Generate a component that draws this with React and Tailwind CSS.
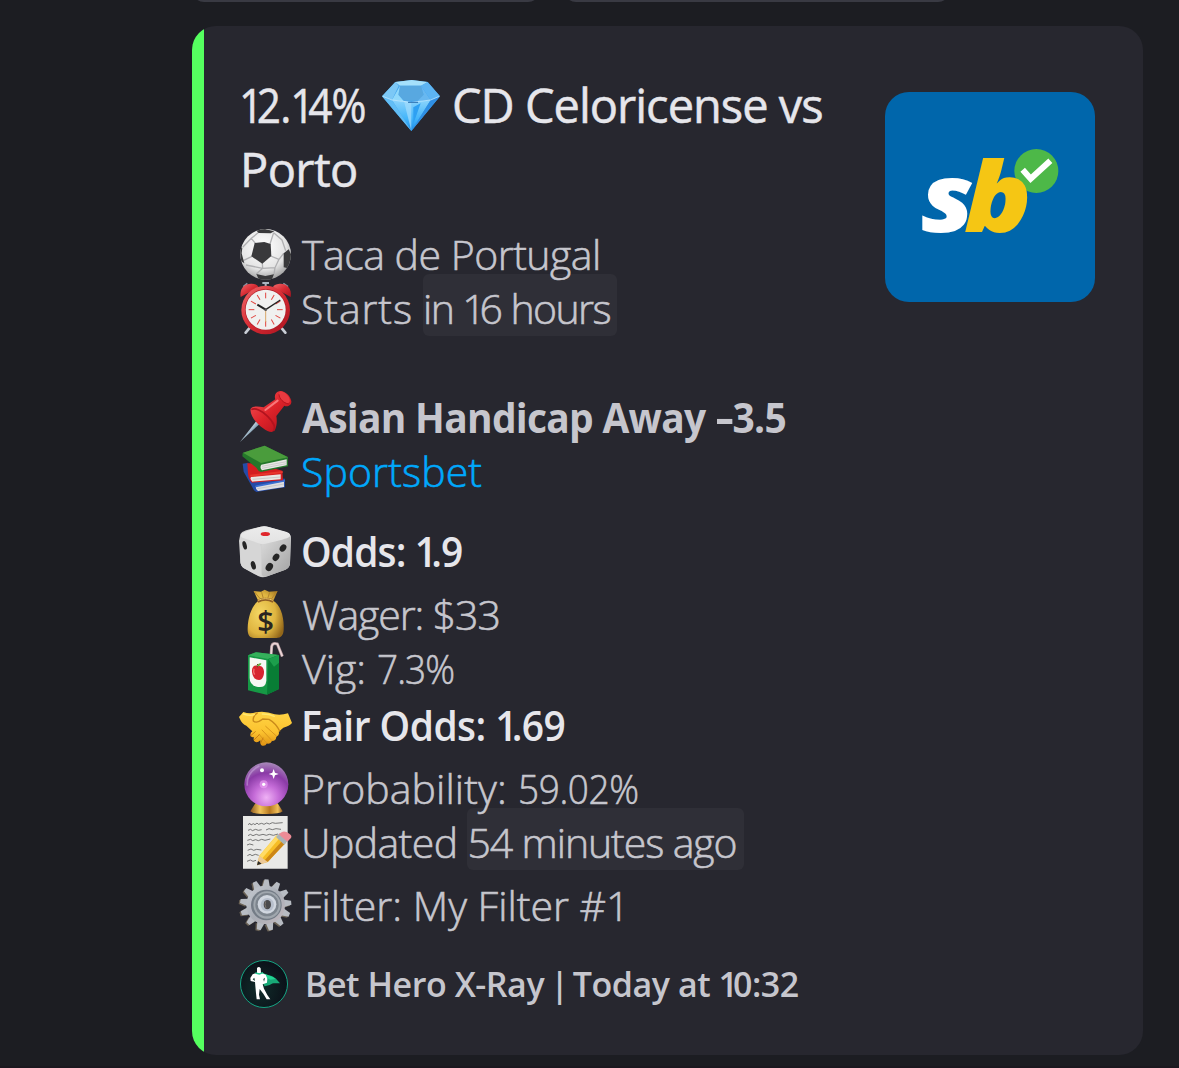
import React from "react";

function Words({ children }) {
  return children.split(/(1)/).map((part, i) =>
    part === "1" ? (
      <span key={i} className="tracking-[-0.15em]">1</span>
    ) : (
      <React.Fragment key={i}>{part}</React.Fragment>
    )
  );
}

function Icon({ viewBox, className = "h-[54px] w-[52px]", children }) {
  return (
    <svg viewBox={viewBox} className={`${className} shrink-0 overflow-visible`} aria-hidden="true">
      {children}
    </svg>
  );
}

function Diamond() {
  return (
    <Icon viewBox="606 237 174 159" className="mr-3 h-[53px] w-[58px]">
      <defs>
        <linearGradient id="gemL" x1="0" y1="0" x2="1" y2="1">
          <stop offset="0" stopColor="#4ba9ee" />
          <stop offset="1" stopColor="#2d9df0" />
        </linearGradient>
        <linearGradient id="gemC" x1="0" y1="0" x2="0" y2="1">
          <stop offset="0" stopColor="#8bd3fb" />
          <stop offset="0.6" stopColor="#43b5fa" />
          <stop offset="1" stopColor="#1d8de8" />
        </linearGradient>
      </defs>
      <path d="M606 289 646 246 695 240 743 246 780 289 694 393Z" fill="url(#gemL)" />
      <path d="M636 300 694 307 752 300 694 393Z" fill="url(#gemC)" />
      <path d="M606 289 646 246 656 257 636 300Z" fill="#7cc8f6" />
      <path d="M646 246 695 240 743 246 723 257 660 257Z" fill="#a5e0fb" />
      <path d="M660 257 723 257 731 284 716 302 672 302 655 284Z" fill="#58a8e0" />
      <path d="M660 257 636 300 672 304 655 284Z" fill="#90d8fb" />
      <path d="M723 257 752 300 712 304 731 284Z" fill="#68b8f0" />
      <path d="M743 246 780 289 752 300 723 257Z" fill="#5db4f2" />
      <path d="M606 289 636 300 694 393Z" fill="#62bdf5" />
      <path d="M780 289 752 300 694 393Z" fill="#2f8fe4" />
      <path d="M672 304 694 307 694 393Z" fill="#a0dbfc" opacity=".75" />
      <path d="M700 322 722 310 700 372Z" fill="#2ea0f2" />
      <path d="M608 289 636 300 694 307 752 300 778 289" fill="none" stroke="#d5f1ff" strokeWidth="2" />
      <path d="M684 307H714" stroke="#276eaf" strokeWidth="3" />
    </Icon>
  );
}

function Soccer() {
  return (
    <Icon viewBox="27 18 156 162">
      <defs>
        <radialGradient id="ball" cx=".45" cy=".35" r=".65">
          <stop offset="0" stopColor="#ffffff" />
          <stop offset=".7" stopColor="#e4e4e4" />
          <stop offset="1" stopColor="#a5a5a5" />
        </radialGradient>
        <clipPath id="ballClip"><circle cx="107" cy="103" r="76" /></clipPath>
      </defs>
      <circle cx="107" cy="103" r="76" fill="url(#ball)" />
      <g clipPath="url(#ballClip)">
        <path d="M76 70 64 55M120 72 131 38M64 55 86 37M64 55 38 82M66 109 41 121M97 129 98 145M122 108 147 118M98 145 79 162M98 145 48 135M98 145 135 143 147 118M135 143 132 163M147 118 161 100M131 38 156 60 167 92" fill="none" stroke="#b0b0b2" strokeWidth="4" />
        <g fill="#39393b">
          <path d="M74 69 103 66 122 72 124 108 97 131 64 109Z" />
          <path d="M77 30 100 26 133 34 122 40 86 39Z" />
          <path d="M28 76 37 84 35 100 43 130 32 122Z" />
          <path d="M161 100 176 88 186 108 174 145 161 142Z" />
          <path d="M79 162 106 168 132 163 124 182H88Z" />
        </g>
      </g>
    </Icon>
  );
}

function AlarmClock() {
  const ticks = Array.from({ length: 12 }, (_, i) => i * 30);
  return (
    <Icon viewBox="27 180 156 162">
      <defs>
        <linearGradient id="clockRed" x1="0" y1="0" x2="1" y2="1">
          <stop offset="0" stopColor="#f06a6c" />
          <stop offset=".5" stopColor="#d72b33" />
          <stop offset="1" stopColor="#a9131f" />
        </linearGradient>
      </defs>
      <path d="M62 320 47 338M151 320 166 338" stroke="#c9ced6" strokeWidth="8" strokeLinecap="round" />
      <path d="M97 189H117M107 189V203" stroke="#aab4c0" strokeWidth="6" />
      <path d="M40 200 52 190M174 200 160 190" stroke="#8796a4" strokeWidth="5" />
      <path d="M32 231C28 204 44 190 65 191 77 192 84 196 85 202Z" fill="url(#clockRed)" />
      <path d="M182 231C186 204 170 190 149 191 137 192 130 196 129 202Z" fill="url(#clockRed)" />
      <circle cx="107" cy="270" r="73" fill="url(#clockRed)" />
      <circle cx="107" cy="269" r="62" fill="#b01d27" />
      <circle cx="107" cy="269" r="60" fill="#f0f0ef" />
      {ticks.map((a) => (
        <path key={a} d="M107 218V235" transform={`rotate(${a} 107 269)`} stroke="#e0443f" strokeWidth="3" />
      ))}
      <path d="M107 270V306" stroke="#d8a86a" strokeWidth="3" />
      <path d="M107 269 82 254" stroke="#222" strokeWidth="6" />
      <path d="M107 269 151 240" stroke="#222" strokeWidth="4" />
      <circle cx="107" cy="269" r="4" fill="#555" />
    </Icon>
  );
}

function Pushpin() {
  return (
    <Icon viewBox="27 27 156 162">
      <defs>
        <linearGradient id="pinRed" x1="0" y1="0" x2="1" y2="1">
          <stop offset="0" stopColor="#f4575a" />
          <stop offset=".5" stopColor="#dd2229" />
          <stop offset="1" stopColor="#a90f1b" />
        </linearGradient>
        <linearGradient id="needle" x1="0" y1="0" x2="1" y2="1">
          <stop offset=".35" stopColor="#e8f4fb" />
          <stop offset=".6" stopColor="#6e8ea5" />
        </linearGradient>
      </defs>
      <path d="M30 186 83 118 93 128Z" fill="url(#needle)" />
      <path d="M62 86C69 78 84 79 101 82L136 58C132 47 136 35 150 33 165 32 182 48 184 64 185 76 172 82 163 77L139 108C143 130 138 152 125 156 103 156 56 113 62 86Z" fill="url(#pinRed)" />
      <path d="M64 89C75 82 96 92 113 109 130 126 139 144 130 153" fill="none" stroke="#b1131e" strokeWidth="5" />
      <path d="M106 90 143 62" fill="none" stroke="#f9777a" strokeWidth="6" strokeLinecap="round" />
      <ellipse cx="163" cy="52" rx="21" ry="11" transform="rotate(47 163 52)" fill="#ea3a40" />
      <path d="M147 43C148 57 160 69 176 72" fill="none" stroke="#b9151f" strokeWidth="3" />
    </Icon>
  );
}

function Books() {
  return (
    <Icon viewBox="27 189 156 162">
      <path d="M38 251 55 248 68 290 165 296V322L79 336 72 331 41 275Z" fill="#244ba8" />
      <path d="M77 319 162 304V321L84 333Q76 326 77 319Z" fill="#dedee2" />
      <path d="M77 319 165 302" stroke="#3c6ed0" strokeWidth="5" />
      <path d="M52 250 80 250 157 272 159 301 66 308Q56 299 54 282Z" fill="#d41d20" />
      <path d="M63 291 152 283V298L67 305Q59 298 63 291Z" fill="#e9e7e4" />
      <path d="M61 287 158 276" stroke="#e8352d" strokeWidth="6" />
      <path d="M38 219 104 197 174 231 174 259 93 276Q84 273 79 263L37 229Z" fill="#24772a" />
      <path d="M39 218 104 197 174 232 93 249Z" fill="#4a9c3c" />
      <path d="M94 254 170 238V256L96 271Q88 262 94 254Z" fill="#e9e8e6" />
      <path d="M96 259 169 245M96 265 169 251M82 326 162 312M68 298 152 291" stroke="#bbb" strokeWidth="2" />
    </Icon>
  );
}

function Dice() {
  return (
    <Icon viewBox="27 24 156 162">
      <defs>
        <linearGradient id="diceR" x1="0" y1="0" x2="1" y2="1">
          <stop offset="0" stopColor="#dcdcdc" />
          <stop offset="1" stopColor="#a2a2a2" />
        </linearGradient>
        <linearGradient id="diceTop" x1="0" y1="0" x2="0" y2="1">
          <stop offset="0" stopColor="#ececec" />
          <stop offset="1" stopColor="#e2e2e2" />
        </linearGradient>
      </defs>
      <path d="M31 58Q34 51 48 46L92 35Q104 32 116 36L168 52Q183 57 183 68L180 144Q180 158 166 164L112 184Q98 190 86 184L42 160Q31 153 31 139L27 78Z" fill="#d0d0d0" />
      <path d="M30 63 84 83Q94 88 93 100L94 174Q94 184 87 183L42 160Q31 153 31 139Z" fill="#d6d6d6" />
      <path d="M95 90 182 62 180 144Q180 158 166 164L112 184Q95 189 95 174Z" fill="url(#diceR)" />
      <path d="M34 57Q40 50 92 35 104 32 116 36L168 50Q186 56 178 66 170 72 107 86 94 90 81 83L37 68Q30 64 34 57Z" fill="url(#diceTop)" />
      <ellipse cx="106" cy="57" rx="14" ry="6" fill="#df252b" />
      <g fill="#252525">
        <ellipse cx="44" cy="91" rx="6" ry="13" transform="rotate(-16 44 91)" />
        <ellipse cx="70" cy="151" rx="7" ry="13" transform="rotate(-16 70 151)" />
        <ellipse cx="159" cy="99" rx="9" ry="12" transform="rotate(35 159 99)" />
        <ellipse cx="138" cy="127" rx="9" ry="12" transform="rotate(35 138 127)" />
        <ellipse cx="118" cy="156" rx="10" ry="13" transform="rotate(35 118 156)" />
      </g>
    </Icon>
  );
}

function MoneyBag() {
  return (
    <Icon viewBox="27 213 156 162">
      <defs>
        <radialGradient id="bag" cx=".35" cy=".5" r=".7">
          <stop offset="0" stopColor="#f5d765" />
          <stop offset=".6" stopColor="#dfb540" />
          <stop offset="1" stopColor="#93671a" />
        </radialGradient>
      </defs>
      <path d="M71 228 93 230 104 224 117 230 143 228 130 257C151 269 163 305 161 342 161 360 153 369 139 369H72C58 369 52 359 53 339 54 306 66 270 85 258Z" fill="url(#bag)" />
      <path d="M73 230 93 254M95 232 101 254M119 232 112 254M140 230 123 254" stroke="#b3852e" strokeWidth="3" />
      <path d="M83 259Q106 247 130 259" fill="none" stroke="#8f5d26" strokeWidth="9" />
      <path d="M84 256Q106 246 129 256" fill="none" stroke="#edc760" strokeWidth="3" />
      <text x="107" y="351" textAnchor="middle" className="fill-[#292521] font-['Open_Sans',sans-serif] text-[88px] font-semibold">$</text>
    </Icon>
  );
}

function JuiceBox() {
  return (
    <Icon viewBox="27 15 156 162">
      <path d="M123 65 125 34Q128 22 142 27L157 64" fill="none" stroke="#ac9196" strokeWidth="9" strokeLinejoin="round" />
      <path d="M123 65 125 34Q128 22 142 27L157 64" fill="none" stroke="#ead5d6" strokeWidth="5" />
      <path d="M54 61 78 52 146 60 147 162 110 179 54 166Z" fill="#169845" />
      <path d="M54 61 78 52 146 60 115 72Z" fill="#35b05b" />
      <path d="M115 72 147 60V162L111 179Z" fill="#087d35" />
      <path d="M115 72 147 60V83L132 95Z" fill="#1c9e4c" />
      <path d="M59 67 109 76V137Q107 159 84 156 59 151 59 129Z" fill="#f7f8f4" />
      <path d="M84 94C76 88 64 95 66 111 68 127 77 136 84 134 94 138 103 125 102 109 101 95 91 90 84 94Z" fill="#d72430" />
      <path d="M72 101Q69 109 74 119" stroke="#f36d70" strokeWidth="4" fill="none" />
      <path d="M83 97Q80 91 83 87" stroke="#6d421d" strokeWidth="3" fill="none" />
      <path d="M82 94Q84 83 94 85 93 93 82 94Z" fill="#5dad3d" />
    </Icon>
  );
}

function Handshake() {
  return (
    <Icon viewBox="27 186 156 162">
      <defs>
        <linearGradient id="hands" x1="0" y1="0" x2="0" y2="1">
          <stop offset="0" stopColor="#ffd445" />
          <stop offset=".6" stopColor="#fbc22f" />
          <stop offset="1" stopColor="#df9213" />
        </linearGradient>
      </defs>
      <path d="M27 246 40 231Q59 238 78 232 104 226 134 238 155 241 174 235L186 264Q178 274 160 278L146 290Q150 300 139 305 138 318 126 318 120 330 111 325 104 337 93 330 90 322 91 316 81 326 73 319 69 315 72 307 62 307 61 299 61 293 67 289L49 272Q37 270 27 246Z" fill="url(#hands)" />
      <path d="M82 234Q67 244 70 258 79 267 98 252L117 253Q137 264 149 288" fill="none" stroke="#c98a1a" strokeWidth="4" strokeLinecap="round" />
      <path d="M107 274 139 303M96 285 126 317M87 298 111 325" fill="none" stroke="#d9961c" strokeWidth="3" strokeLinecap="round" />
      <path d="M62 302 76 290M73 314 88 299M92 324 99 309" stroke="#c97f14" strokeWidth="3" strokeLinecap="round" />
      <path d="M40 237Q59 244 73 239M97 237Q118 237 133 244" fill="none" stroke="#ffe870" strokeWidth="4" strokeLinecap="round" />
    </Icon>
  );
}

function CrystalBall() {
  return (
    <Icon viewBox="27 15 156 162">
      <defs>
        <radialGradient id="orb" cx=".5" cy=".8" r=".8">
          <stop offset="0" stopColor="#efb1f5" />
          <stop offset=".35" stopColor="#c56cd8" />
          <stop offset=".7" stopColor="#8a3aa6" />
          <stop offset="1" stopColor="#a88ab9" />
        </radialGradient>
        <linearGradient id="brass">
          <stop offset="0" stopColor="#8a571c" />
          <stop offset=".3" stopColor="#f2c35d" />
          <stop offset=".6" stopColor="#b77820" />
          <stop offset=".85" stopColor="#efbe58" />
          <stop offset="1" stopColor="#8d581c" />
        </linearGradient>
      </defs>
      <path d="M76 145H143L158 169Q150 177 109 177 68 177 61 169Z" fill="url(#brass)" />
      <circle cx="109" cy="88" r="66" fill="url(#orb)" />
      <path d="M52 92Q48 53 88 33" fill="none" stroke="#c9a4dc" strokeWidth="5" opacity=".55" />
      <circle cx="101" cy="88" r="12" fill="#f0a6f6" opacity=".6" />
      <g fill="#fff">
        <path d="M131 42 135 53 146 57 135 61 131 72 127 61 116 57 127 53Z" />
        <circle cx="96" cy="46" r="6" />
        <circle cx="101" cy="88" r="5" />
      </g>
    </Icon>
  );
}

function Memo() {
  return (
    <Icon viewBox="27 177 156 162">
      <path d="M39 183H173V341H39Z" fill="#e9e9e7" />
      <path d="M54 209l6-4 3 5 7-4 5 3 6-5 4 4 10-3 7 3 8-4 8 3 9-4 9 2 22-2M54 226l8-3 5 4 10-4 8 3 10-2M108 225l9-4 10 3 11-3 15 2M54 242l7-4 8 4 10-4 8 3 12-3 10 3 9-3 12 3 14-4M52 256l10-3 6 4 9-3 8 3 10-4 10 3 16-4M51 270l8-3 11 3M53 286l10-4 8 4 9-3 14 2M52 302l8-4 6 4 10-4 10 3M51 319l10-4 8 4 9-3" fill="none" stroke="#606060" strokeWidth="2.5" />
      <path d="M81 331 88 302 140 241 167 263 113 321Z" fill="#f6bd25" />
      <path d="M88 302 140 241 149 249 97 310Z" fill="#ffdb65" />
      <path d="M104 316 158 256 167 263 113 321Z" fill="#cc8617" />
      <path d="M81 331 88 302 113 321Z" fill="#ecc998" />
      <path d="M81 331 84 318 95 326Z" fill="#292929" />
      <path d="M138 246 148 235 174 256 163 269Z" fill="#a9b4b7" />
      <path d="M146 238 156 231Q165 227 178 236 188 243 182 250L172 260Z" fill="#ed8c96" />
    </Icon>
  );
}

function Gear() {
  const teeth = Array.from({ length: 13 }, (_, i) => i * (360 / 13) + 2);
  return (
    <Icon viewBox="177 21 156 162">
      <defs>
        <linearGradient id="steel" x1="0" y1="0" x2="1" y2="1">
          <stop offset="0" stopColor="#c6cbd2" />
          <stop offset=".5" stopColor="#a9adb5" />
          <stop offset="1" stopColor="#c3b9bf" />
        </linearGradient>
      </defs>
      <g fill="#6b6255" transform="translate(-3 2)">
        {teeth.map((a) => <path key={a} d="M245 50 250 29H262L267 50Z" transform={`rotate(${a} 256 106)`} />)}
      </g>
      {teeth.map((a) => <path key={a} d="M245 52 251 28H263L268 52Z" transform={`rotate(${a} 257 105)`} fill="#b7bbc2" />)}
      <circle cx="257" cy="105" r="58" fill="url(#steel)" />
      <circle cx="259" cy="105" r="46" fill="#747c86" />
      <circle cx="261" cy="105" r="41" fill="#a0a7ae" />
      <circle cx="261" cy="104" r="35" fill="#7d858e" />
      <circle cx="261" cy="103" r="28" fill="#d1d7e0" />
      <circle cx="262" cy="104" r="20" fill="#b6becb" />
      <ellipse cx="262" cy="104" rx="11" ry="14" fill="#4b4b4e" />
      <path d="M257 94Q253 104 258 114" fill="none" stroke="#7b736c" strokeWidth="3" />
    </Icon>
  );
}

function HeroAvatar() {
  return (
    <Icon viewBox="180 270 144 144" className="size-12">
      <defs>
        <radialGradient id="heroBg" cx=".4" cy=".6" r=".6">
          <stop offset="0" stopColor="#102c2a" />
          <stop offset="1" stopColor="#0b1119" />
        </radialGradient>
      </defs>
      <circle cx="252" cy="342" r="70.5" fill="url(#heroBg)" stroke="#14a583" strokeWidth="3" />
      <path d="M246 308C263 316 278 316 288 326L300 340C288 340 278 337 269 345L254 349 248 338Z" fill="#18a977" />
      <path d="M247 309C262 316 277 318 287 327L271 329 255 321Z" fill="#22d694" />
      <path d="M231 294Q237 288 242 295L243 308 257 314 262 326 261 338 248 343 252 356 262 375 271 388 260 388 250 371 239 357 237 374 240 388 230 388 228 370 226 348 225 336 212 333 211 324 218 313 231 308Z" fill="#fff" />
      <path d="M218 328 223 323 225 333ZM250 327 255 323 252 335Z" fill="#10392f" />
      <path d="M226 309 238 312 249 308" fill="none" stroke="#26c993" strokeWidth="4" />
    </Icon>
  );
}

function SportsbetLogo() {
  return (
    <Icon viewBox="-45 -114 630 630" className="size-[210px] rounded-3xl bg-[#0066ab]">
      <circle cx="409" cy="123" r="66" fill="#4db848" />
      <path d="M368 119 392 146 451 92" fill="none" stroke="#fff" strokeWidth="18" />
      <text transform="translate(62 306) scale(1.12 1)" className="fill-white font-['Open_Sans',sans-serif] text-[286px] font-extrabold italic">s</text>
      <text transform="translate(192 306) scale(1.15 1)" className="fill-[#f5c614] font-['Open_Sans',sans-serif] text-[291px] font-extrabold italic">b</text>
    </Icon>
  );
}

function Row({ icon, className = "", children }) {
  return (
    <div className={`flex h-[54px] items-center gap-2.5 text-[41px] leading-[54px] font-light whitespace-pre text-[#c6c6cd] ${className}`}>
      {icon}
      <div className="pt-0.5">{children}</div>
    </div>
  );
}

const light = "[-webkit-text-stroke:0.6px_currentColor]";

function Light({ className = "", children }) {
  return <span className={`${light} ${className}`}>{children}</span>;
}

function Timestamp({ className = "", children }) {
  return <span className={`rounded-md bg-white/4 pt-1.5 ${light} ${className}`}><Words>{children}</Words></span>;
}

export default function App() {
  return (
    <main className="flex h-[1068px] w-[1179px] flex-col overflow-hidden border-b-2 border-[#1b181f] bg-[#1c1d22] pl-48 font-['Open_Sans',sans-serif]">
      <div className="flex h-0.5 shrink-0 items-end gap-6 overflow-hidden">
        <div className="h-12 w-[348px] shrink-0 rounded-xl bg-[#393a43]" />
        <div className="h-12 w-[386px] shrink-0 rounded-xl bg-[#393a43]" />
      </div>

      <article className="mt-6 flex h-[1029px] w-[951px] shrink-0 overflow-hidden rounded-3xl bg-[#27272f]">
        <div className="w-3 shrink-0 bg-[#55ff5f]" />
        <div className="flex flex-1 items-start justify-between pr-12 pl-[35px]">
          <div className="flex flex-col pt-[47px]">
            <h1 className="text-[47px] leading-16 font-normal whitespace-nowrap text-[#e6e6eb] [-webkit-text-stroke:0.5px_currentColor]">
              <span className="flex items-center">
                <span className="w-[143px]"><span className="inline-block origin-left scale-x-90 tracking-[-1px]"><Words>12.14%</Words></span></span>
                <Diamond />
                <span className="tracking-[-1px]">CD Celoricense vs</span>
              </span>
              <span className="block pl-px tracking-[-0.6px]">Porto</span>
            </h1>

            <section className="mt-[25px]">
              <Row icon={<Soccer />}><Light className="pl-px tracking-[-0.5px]">Taca de Portugal</Light></Row>
              <Row icon={<AlarmClock />}>
                <Light className="tracking-[0.9px]">Starts</Light>
                <Timestamp className="ml-[10px] pr-[7px] tracking-[-1.6px]">in 16 hours</Timestamp>
              </Row>
              <Row icon={<Pushpin />} className="mt-[55px]">
                <strong className="ml-px inline-block origin-left scale-x-95 font-bold tracking-[-0.75px]">
                  Asian Handicap Away <span className="mr-1.5 inline-block origin-left scale-x-150">-</span>3.5
                </strong>
              </Row>
              <Row icon={<Books />}><Light className="tracking-[0.1px] text-[#00a8fc]">Sportsbet</Light></Row>
            </section>

            <section className="mt-[26px]">
              <Row icon={<Dice />}><strong className="inline-block origin-left scale-x-95 font-semibold tracking-[-0.9px] text-[#e6e6eb]"><Words>Odds: 1.9</Words></strong></Row>
              <Row icon={<MoneyBag />} className="mt-[9px]"><Light className="pl-px tracking-[-1.1px]">Wager: $33</Light></Row>
              <Row icon={<JuiceBox />}><Light className="pl-px">Vig: <span className="inline-block origin-left scale-x-90 tracking-[-1px]">7.3%</span></Light></Row>
              <Row icon={<Handshake />} className="mt-[3px]"><strong className="inline-block origin-left scale-x-95 font-semibold tracking-[-0.55px] text-[#e6e6eb]"><Words>Fair Odds: 1.69</Words></strong></Row>
              <Row icon={<CrystalBall />} className="mt-[9px]"><Light className="tracking-[0.1px]">Probability: <span className="inline-block origin-left scale-x-90 tracking-[-0.4px]">59.02%</span></Light></Row>
              <Row icon={<Memo />}>
                <Light className="tracking-[-0.6px]">Updated</Light>
                <Timestamp className="ml-[10px] pr-2 tracking-[-1.1px]">54 minutes ago</Timestamp>
              </Row>
              <Row icon={<Gear />} className="mt-[9px]"><Light className="">Filter: My Filter #1</Light></Row>
            </section>

            <footer className="mt-[29px] flex items-center gap-[17px] pl-px text-[34px] leading-12 font-semibold tracking-[-0.45px] whitespace-pre text-[#c6c6cd]">
              <HeroAvatar />
              <span>Bet Hero X-Ray<span className="tracking-[-2.6px]"> | </span><Words>Today at 10:32</Words></span>
            </footer>
          </div>
          <div className="pt-[66px]"><SportsbetLogo /></div>
        </div>
      </article>
    </main>
  );
}
